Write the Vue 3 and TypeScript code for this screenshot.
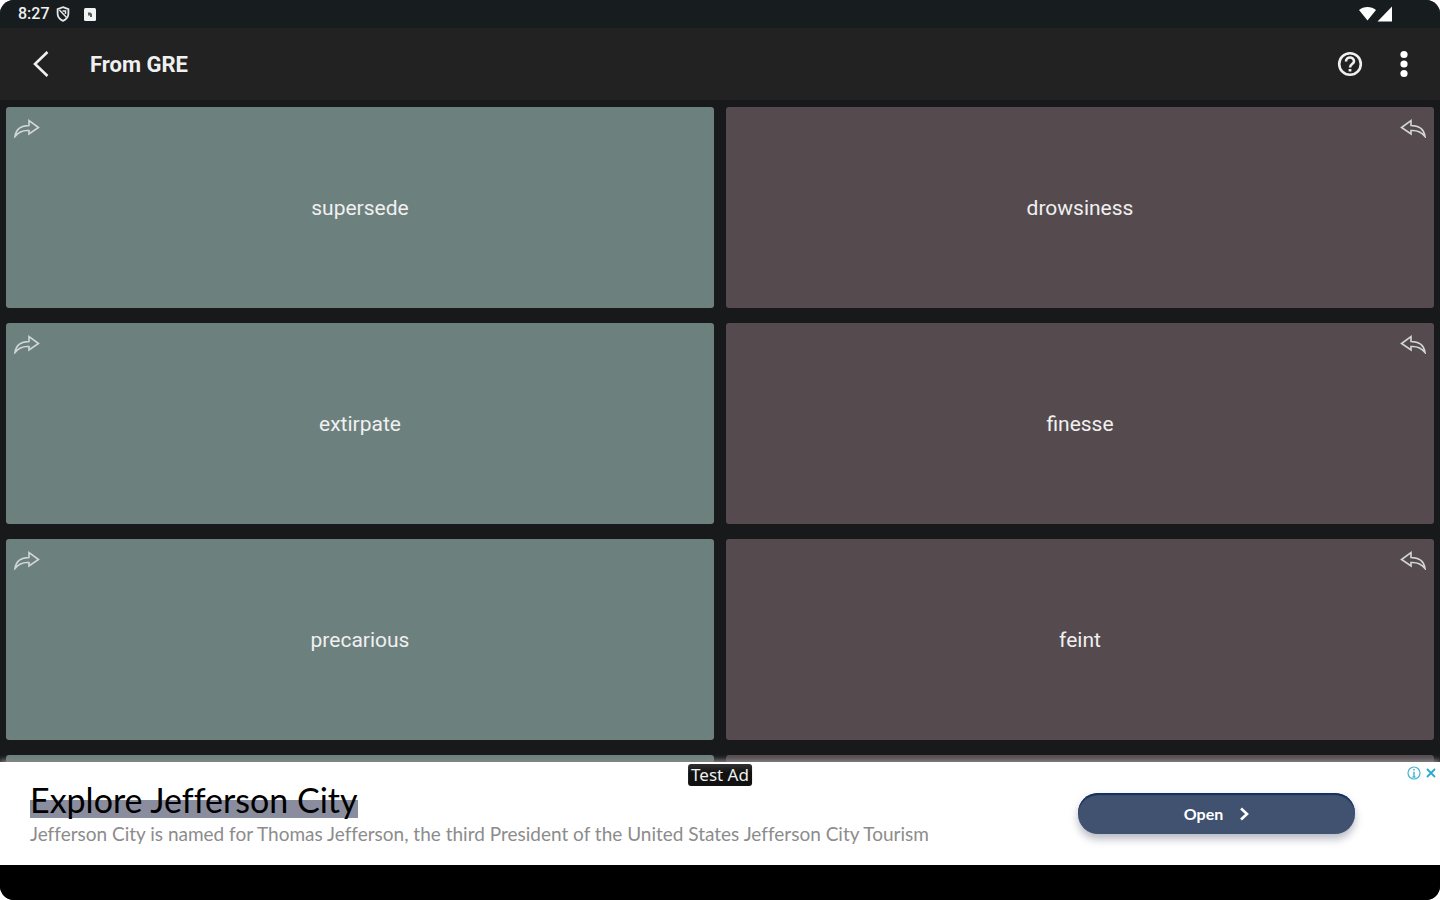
<script setup lang="ts">
interface WordPair {
  left: string
  right: string
}

const pairs: WordPair[] = [
  { left: 'supersede', right: 'drowsiness' },
  { left: 'extirpate', right: 'finesse' },
  { left: 'precarious', right: 'feint' },
  { left: '', right: '' },
]
</script>

<template>
  <div class="device">
    <div class="status">
      <span class="time">8:27</span>
      <svg class="status-icon" width="14" height="16" viewBox="0 0 14 16">
        <path d="M7 1.2 12.4 3.2V7.6C12.4 11 10 13.6 7 14.8 4 13.6 1.6 11 1.6 7.6V3.2Z" fill="none" stroke="#e4e6e6" stroke-width="1.8" />
        <path d="M3.4 4 10.6 11.5M6.5 5H9.5V8" fill="none" stroke="#e4e6e6" stroke-width="1.5" />
      </svg>
      <svg class="status-app" width="12" height="13" viewBox="0 0 12 13">
        <rect width="12" height="13" rx="1.5" fill="#f2f3f3" />
        <path d="M4 4.5H6.5L8 6V9H4Z" fill="#5a5d5e" />
        <path d="M4 7.5H6V9H4Z" fill="#f2f3f3" />
      </svg>
      <svg class="signals" width="36" height="18" viewBox="0 0 36 18">
        <path d="M1 5C5.5 1 13.5 1 18 5L9.5 15.5Z" fill="#fff" />
        <path d="M34 1.5V16.5H19.5Z" fill="#fff" />
      </svg>
    </div>

    <header class="bar">
      <button class="icon-button" aria-label="Back">
        <svg width="18" height="28" viewBox="0 0 18 28">
          <path d="M15.5 2 3 14 15.5 26" fill="none" stroke="#f0f0f0" stroke-width="2.6" />
        </svg>
      </button>
      <h1>From GRE</h1>
      <button class="icon-button help" aria-label="Help">
        <svg width="26" height="26" viewBox="0 0 26 26" fill="none" stroke="#f0f0f0">
          <circle cx="13" cy="13" r="10.8" stroke-width="2.6" />
          <path d="M9 10.5C9 5.3 17 5.3 17 10.3 17 13 13 13.2 13 16.5" stroke-width="2.6" />
          <path d="M13 18V20.5" stroke-width="2.8" />
        </svg>
      </button>
      <button class="icon-button" aria-label="More options">
        <svg width="10" height="28" viewBox="0 0 10 28" fill="#fff">
          <circle cx="5" cy="4.5" r="3.6" />
          <circle cx="5" cy="14" r="3.6" />
          <circle cx="5" cy="23.5" r="3.6" />
        </svg>
      </button>
    </header>

    <main class="list">
      <template v-for="(pair, index) in pairs" :key="index">
        <button class="card sage" :aria-label="pair.left || 'Next card'">
          <svg class="arrow" width="26" height="20" viewBox="0 0 26 20">
            <path d="M1 18.5C2 11 7 7.5 15 7.5V2.5L24.5 9.5 15 16V12.5C8.5 12 4.5 14 1 18.5Z" />
          </svg>
          <span>{{ pair.left }}</span>
        </button>
        <button class="card plum" :aria-label="pair.right || 'Next card'">
          <svg class="arrow" width="26" height="20" viewBox="0 0 26 20">
            <path d="M25 18.5C24 11 19 7.5 11 7.5V2.5L1.5 9.5 11 16V12.5C17.5 12 21.5 14 25 18.5Z" />
          </svg>
          <span>{{ pair.right }}</span>
        </button>
      </template>
    </main>

    <aside class="ad">
      <span class="tag">Test Ad</span>
      <div class="copy">
        <a class="title" href="#">Explore Jefferson City</a>
        <p>Jefferson City is named for Thomas Jefferson, the third President of the United States Jefferson City Tourism</p>
      </div>
      <button class="open">
        Open
        <svg width="10" height="14" viewBox="0 0 10 14">
          <path d="M2 1.5 8 7 2 12.5" fill="none" stroke="#fff" stroke-width="2.6" />
        </svg>
      </button>
      <div class="choices">
        <button aria-label="Ad information">
          <svg width="14" height="14" viewBox="0 0 14 14" fill="none" stroke="#45b5d3">
            <circle cx="7" cy="7" r="6" stroke-width="1.2" />
            <path d="M7 3V4.6M7 5.8V11M5.5 11H8.5" stroke-width="1.5" />
          </svg>
        </button>
        <button aria-label="Close ad">
          <svg width="10" height="14" viewBox="0 0 10 14">
            <path d="M1 3 9 11M9 3 1 11" stroke="#27a9cf" stroke-width="1.8" />
          </svg>
        </button>
      </div>
    </aside>
    <div class="nav"></div>
  </div>
</template>

<style>
body {
  margin: 0;
  background: #fff;
}
</style>

<style scoped>
* {
  box-sizing: border-box;
}

button {
  border: 0;
  padding: 0;
  background: none;
  font: inherit;
  color: inherit;
}

.device {
  display: flex;
  flex-direction: column;
  height: 100vh;
  overflow: hidden;
  border-radius: 14px;
  background: #17191b;
  color: #f0f0f0;
  font-family: Roboto, sans-serif;
}

.status {
  display: flex;
  align-items: center;
  flex: none;
  height: 28px;
  padding: 0 46px 0 18px;
  background: #171c1f;
}

.time {
  font-size: 16px;
  font-weight: 500;
  line-height: 28px;
}

.status-icon {
  margin-left: 6px;
}

.status-app {
  margin-left: 14px;
}

.signals {
  margin-left: auto;
}

.bar {
  display: flex;
  align-items: center;
  flex: none;
  height: 72px;
  padding: 0 31px 0 32px;
  background: #222;
}

.icon-button {
  display: flex;
}

h1 {
  flex: 1;
  margin: 2px 0 0 40px;
  font-size: 22px;
  font-weight: 700;
  line-height: 28px;
}

.help {
  margin-right: 36px;
}

.list {
  display: grid;
  grid-template-columns: 1fr 1fr;
  grid-auto-rows: 201px;
  gap: 15px 12px;
  flex: 1;
  min-height: 0;
  padding: 7px 6px 0;
  overflow: hidden;
  background: #17191b;
}

.card {
  position: relative;
  border-radius: 3px;
  font-size: 21px;
  line-height: 28px;
}

.sage {
  background: #6c807e;
}

.plum {
  background: #554b4f;
}

.arrow {
  position: absolute;
  top: 11px;
  fill: none;
  stroke: #d2d7d6;
  stroke-width: 1.6;
}

.sage .arrow {
  left: 8px;
}

.plum .arrow {
  right: 8px;
}

.ad {
  position: relative;
  display: flex;
  align-items: center;
  justify-content: space-between;
  flex: none;
  height: 103px;
  padding: 0 85px 0 30px;
  background: #fff;
  box-shadow: 0 -2px 5px #888;
  font-family: Lato, sans-serif;
}

.tag {
  position: absolute;
  top: 2px;
  left: 50%;
  padding: 0 3px;
  border-radius: 3px;
  background: linear-gradient(#333, #111 40%);
  color: #f0f0f0;
  font-family: "Noto Sans", sans-serif;
  font-size: 17px;
  line-height: 22px;
  transform: translateX(-50%);
}

.copy {
  display: flex;
  flex-direction: column;
  align-items: flex-start;
  gap: 4px;
  font-variant-ligatures: none;
}

.title {
  background: linear-gradient(transparent 50%, #8a8d9e 50%);
  color: #000;
  font-size: 34px;
  line-height: 36px;
  text-decoration: none;
}

p {
  margin: 0;
  color: #8c8c8c;
  font-size: 19px;
  line-height: 24px;
}

.open {
  display: flex;
  align-items: center;
  justify-content: center;
  gap: 16px;
  width: 277px;
  height: 41px;
  border-radius: 20px;
  background: #40526f;
  box-shadow: inset 0 2px 1px #14305e, 0 5px 8px #b8bac4;
  color: #fff;
  font-size: 16px;
  font-weight: 700;
}

.choices {
  position: absolute;
  top: 4px;
  right: 4px;
  display: flex;
  gap: 5px;
}

.choices button {
  display: flex;
}

.nav {
  position: relative;
  flex: none;
  height: 35px;
  background: #000;
}
</style>
